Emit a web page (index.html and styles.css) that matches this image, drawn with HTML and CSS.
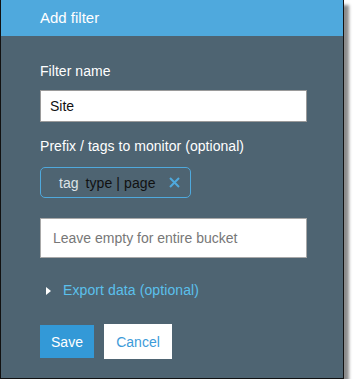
FILE: index.html
```html
<!DOCTYPE html>
<html lang="en">
<head>
    <meta charset="UTF-8">
    <title>Add filter</title>
    <link rel="stylesheet" href="styles.css">
</head>
<body>
    <div class="dialog">
        <div class="dialog-header">Add filter</div>

        <div class="dialog-body">
            <label class="field-label" for="filter-name">Filter name</label>
            <input type="text" id="filter-name" class="text-input name-input" value="Site">

            <label class="field-label prefix-label" for="prefix">Prefix / tags to monitor (optional)</label>
            <div class="tag-chip">
                <span class="tag-key">tag</span>
                <span class="tag-value">type | page</span>
                <svg class="tag-remove" width="11" height="11" viewBox="0 0 11 11">
                    <path d="M1 1 L10 10 M10 1 L1 10" stroke="#4fa9dd" stroke-width="2" fill="none"/>
                </svg>
            </div>

            <input type="text" id="prefix" class="text-input prefix-input" placeholder="Leave empty for entire bucket">

            <div class="export-toggle">
                <span class="caret"></span>
                <span class="export-text">Export data (optional)</span>
            </div>

            <div class="actions">
                <button class="btn btn-save">Save</button>
                <button class="btn btn-cancel">Cancel</button>
            </div>
        </div>
    </div>
</body>
</html>
```

FILE: styles.css
```css
body {
    margin: 0;
    background-color: #fff;
    font-family: "Liberation Sans", Arial, sans-serif;
}

.dialog {
    width: 342px;
    height: 378px;
    background-color: #4e6472;
    border: 1px solid #111;
    border-top: none;
    box-shadow: 5px 5px 3px rgba(0,0,0,0.45);
}

.dialog-header {
    height: 36px;
    line-height: 36px;
    padding-left: 39px;
    background-color: #4fa9dd;
    color: #fff;
    font-size: 15px;
}

.dialog-body {
    display: flex;
    flex-direction: column;
    align-items: flex-start;
    padding: 27px 36px 0 39px;
}

.field-label {
    display: block;
    color: #fff;
    font-size: 14px;
    line-height: 16px;
    letter-spacing: 0.05px;
}

.text-input {
    box-sizing: border-box;
    width: 267px;
    margin: 0;
    background-color: #fff;
    font-family: "Liberation Sans", Arial, sans-serif;
    font-size: 14px;
    color: #111;
    outline: none;
}

.name-input {
    height: 32px;
    margin-top: 11px;
    padding: 0 9px;
    border: 1px solid #9a9a9a;
}

.prefix-label {
    margin-top: 16px;
}

.tag-chip {
    box-sizing: border-box;
    display: flex;
    align-items: center;
    height: 31px;
    width: 151px;
    margin-top: 13px;
    padding: 0 0 0 18px;
    border: 1px solid #4fa9dd;
    border-radius: 5px;
    font-size: 14px;
}

.tag-key {
    color: #dde3e7;
    margin-right: 7px;
}

.tag-value {
    color: #111;
    letter-spacing: 0.1px;
}

.tag-remove {
    margin-left: 13px;
}

.prefix-input {
    height: 40px;
    margin-top: 20px;
    padding: 0 12px;
    border: 1px solid #a8a8a8;
}

.prefix-input::placeholder {
    color: #777;
}

.export-toggle {
    display: flex;
    align-items: center;
    margin-top: 24px;
    height: 16px;
}

.caret {
    width: 0;
    height: 0;
    margin-left: 6px;
    margin-right: 12px;
    margin-top: 1px;
    border-left: 5px solid #fff;
    border-top: 4px solid transparent;
    border-bottom: 4px solid transparent;
}

.export-text {
    color: #5bc0ec;
    font-size: 14px;
    letter-spacing: 0.1px;
}

.actions {
    display: flex;
    align-items: center;
    gap: 10px;
    margin-top: 26px;
}

.btn {
    border: none;
    margin: 0;
    font-family: "Liberation Sans", Arial, sans-serif;
    font-size: 14px;
    cursor: pointer;
}

.btn-save {
    height: 33px;
    width: 54px;
    background-color: #3399d7;
    color: #fff;
}

.btn-cancel {
    height: 35px;
    width: 68px;
    background-color: #fff;
    color: #3d9bd9;
}
```
